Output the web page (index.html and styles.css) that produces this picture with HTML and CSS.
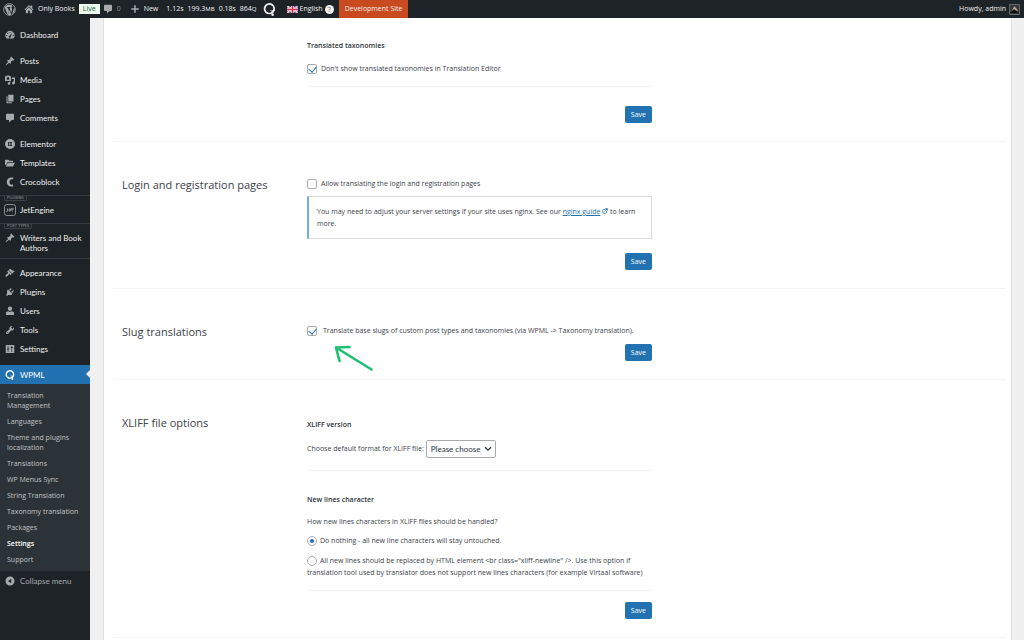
FILE: index.html
```html
<!DOCTYPE html>
<html lang="en">
<head>
<meta charset="utf-8">
<title>WPML Settings</title>
<link rel="stylesheet" href="styles.css">
</head>
<body>
<svg class="defs" aria-hidden="true">
  <symbol id="pin" viewBox="0 0 20 20"><path d="M10.440 3.020l1.820-1.820 6.360 6.350-1.830 1.820c-1.050-.68-2.480-.57-3.410.36l-.75.75c-.92.93-1.040 2.350-.35 3.410l-1.830 1.820-2.410-2.410-2.800 2.790c-.42.42-3.380 2.710-3.800 2.290s1.860-3.390 2.280-3.810l2.790-2.790L4.100 9.360l1.830-1.820c1.050.69 2.480.57 3.400-.36l.75-.75c.93-.92 1.050-2.350.36-3.410z"/></symbol>
  <symbol id="bubble" viewBox="0 0 20 20"><path d="M4 1.500h12c1 0 2 .9 2 2v8.500c0 1-1 2-2 2h-2.500l-5.500 5v-5H4c-1 0-2-1-2-2V3.500c0-1.100 1-2 2-2z"/></symbol>
  <symbol id="wpml" viewBox="0 0 20 20"><path d="M7.500 15.800A7.300 7.300 0 1 1 16.800 11" fill="none" stroke="currentColor" stroke-width="2.800"/><path d="M6.500 14.300c2.500 1.300 5.500 1 7.300-.8-1.600-.5-2.600-1.500-3-3 1.600 1.200 4.200 1.600 7.700-1.500-.2 3-1.200 5.300-3.300 6.800-2.700 1.800-6.500 2.200-9.700.5z"/><circle cx="14.800" cy="17.900" r="2"/></symbol>
</svg>

<header class="topbar">
  <a class="bar-logo" href="#" aria-label="About WordPress"><svg class="icon-lg" viewBox="0 0 24 24"><circle cx="12" cy="12" r="10.800" fill="none" stroke="currentColor" stroke-width="1.500"/><path d="M3.200 8.500 8.500 21.400 11 14.500 8.800 8.600H7.500V7.500h6v1.100h-1.600l3.200 9.600 1.500-4.800c.9-2.600-.9-3.500-.9-5 0-1.300 1-2.600 2.500-2.600A9.600 9.600 0 0 0 4 6.800zM12 13l-3 8.800c2 .6 4.300.5 6.300-.2zM20.500 7.500c.1 2.200-.6 3.800-1.300 5.800l-2.800 7.500A9.700 9.700 0 0 0 20.500 7.500z"/></svg></a>
  <a class="bar-item site" href="#"><svg class="icon" viewBox="0 0 20 20"><path d="m16.500 8.500 2.500 2.600-1.300 1.200L10 4.800l-7.700 7.500L1 11.100 10 2l3.300 3.300V3h3.200zM10 6.500l6.300 6.100V18.500h-4.500v-5H8.200v5H3.700v-5.900z"/></svg><span>Only Books</span></a>
  <span class="live">Live</span>
  <a class="bar-item notes" href="#"><svg class="icon" aria-hidden="true"><use href="#bubble"/></svg><span class="dim">0</span></a>
  <a class="bar-item new" href="#"><svg class="icon" viewBox="0 0 20 20"><path d="M8.500 2.500h3v6h6v3h-6v6h-3v-6h-6v-3h6z"/></svg><span>New</span></a>
  <a class="stats" href="#"><span>1.12s</span><span>199.3<small>MB</small></span><span>0.18s</span><span>864<small>Q</small></span></a>
  <a class="bar-wpml" href="#" aria-label="WPML"><svg class="icon-lg"><use href="#wpml"/></svg></a>
  <a class="lang" href="#"><svg class="flag" viewBox="0 0 22 14"><path fill="#46549b" d="M0 0h22v14H0z"/><path stroke="#fff" stroke-width="3" d="m0 0 22 14M22 0 0 14"/><path stroke="#d9536b" stroke-width="1.200" d="m0 0 22 14M22 0 0 14"/><path stroke="#fff" stroke-width="5" d="M11 0v14M0 7h22"/><path stroke="#d8304a" stroke-width="3" d="M11 0v14M0 7h22"/></svg><span>English</span><span class="help">?</span></a>
  <a class="dev" href="#">Development Site</a>
  <a class="account" href="#"><span>Howdy, admin</span><svg class="avatar" viewBox="0 0 11 11"><path fill="#34363a" stroke="#66696c" d="M.5.500h10v10H.5z"/><path fill="#b9ab98" d="m5.300 2.200 2.200 2.300L9 7 7 6.500 5 5.500 2.500 7.500 4 4.500z"/><path fill="#0c0d0e" d="m5 5.200 2.500 2L10 9H1z"/></svg></a>
</header>

<div class="shell">
  <nav class="menu" aria-label="Main menu">
    <ul class="group">
      <li><a href="#"><svg class="icon" viewBox="0 0 20 20"><path fill-rule="evenodd" d="M3.200 17A9 9 0 1 1 16.800 17zM10 3.500a1.200 1.200 0 1 0 0 2.400 1.200 1.200 0 0 0 0-2.400zM5.500 5.500a1.200 1.200 0 1 0 0 2.400 1.200 1.200 0 0 0 0-2.400zM3.700 10a1.200 1.200 0 1 0 0 2.400 1.200 1.200 0 0 0 0-2.400zm12.600 0a1.200 1.200 0 1 0 0 2.400 1.200 1.200 0 0 0 0-2.400zM14.500 6 9 11.500a2 2 0 1 0 2.500 2z"/></svg>Dashboard</a></li>
    </ul>
    <ul class="group">
      <li><a href="#"><svg class="icon"><use href="#pin"/></svg>Posts</a></li>
      <li><a href="#"><svg class="icon" viewBox="0 0 20 20"><path fill-rule="evenodd" d="M0 2.500h2.500l1-1.500h5l1 1.500H12V12H0zm6 1.900a2.800 2.800 0 1 0 0 5.600 2.800 2.800 0 0 0 0-5.600zM13.500 5H20v11a3 3 0 1 1-2.600-3V8h-3.900zM8 13.500h2.600V17a2.600 2.600 0 1 1-2.600-2.600z"/></svg>Media</a></li>
      <li><a href="#"><svg class="icon" viewBox="0 0 20 20"><path d="M6.500 1.500H17V15H6.500zM3 4.500h2v12h9V18.500H3z"/></svg>Pages</a></li>
      <li><a href="#"><svg class="icon"><use href="#bubble"/></svg>Comments</a></li>
    </ul>
    <ul class="group before-tag">
      <li><a href="#"><svg class="icon" viewBox="0 0 20 20"><path fill-rule="evenodd" d="M10 0a10 10 0 1 0 0 20 10 10 0 0 0 0-20zM6 6h1.800v8H6zm3 0h5v1.800H9zm0 3.100h5v1.800H9zm0 3.100h5V14H9z"/></svg>Elementor</a></li>
      <li><a href="#"><svg class="icon" viewBox="0 0 20 20"><path d="M0 3.500h6.500l2 2H16V8H5L2 14 0 13zm5.500 6H20L16 17H1.500z"/></svg>Templates</a></li>
      <li><a href="#"><svg class="icon" viewBox="0 0 20 20"><path d="M17 1.500C9-1 3.500 4 3.500 10S9 21 17 18.500l-1.500-3.300C11 16 9 13 9 10s2-6 6.500-5.200z"/></svg>Crocoblock</a></li>
    </ul>
    <ul class="group tagged">
      <li class="tag">PLUGINS</li>
      <li><a href="#"><svg class="icon-jet" viewBox="0 0 22 22"><rect x="1" y="1" width="20" height="20" rx="4" fill="none" stroke="currentColor" stroke-width="1.500"/><path d="M6.500 8v4.500c0 1.500-2 1.500-2.500.5M9 11h3.500c0-3.500-3.500-3-3.500 0 0 2.500 2 2.500 3.200 1.500M14.500 7v4.500c0 1.500.8 1.800 1.800 1.500M13.500 9h4.500" fill="none" stroke="currentColor" stroke-width="1.600"/></svg>JetEngine</a></li>
    </ul>
    <ul class="group tagged">
      <li class="tag">POST TYPES</li>
      <li><a href="#"><svg class="icon"><use href="#pin"/></svg>Writers and Book Authors</a></li>
    </ul>
    <ul class="group tagged core">
      <li><a href="#"><svg class="icon" viewBox="0 0 20 20"><path d="M14.480 11.060L7.410 3.990l1.500-1.500c.5-.56 2.300-.47 3.510.32 1.210.8 1.430 1.280 2.910 2.100 1.180.64 2.450 1.260 4.450.85zm-.71.71L6.700 4.700 4.930 6.470c-.39.39-.39 1.020 0 1.410l1.060 1.060c.39.39.39 1.030 0 1.420-.6.6-1.430 1.110-2.210 1.690-.35.26-.7.53-1.010.84C1.430 14.230.4 16.080 1.400 17.070c.99 1 2.840-.03 4.180-1.360.31-.31.58-.66.85-1.020.57-.78 1.080-1.610 1.690-2.210.39-.39 1.020-.39 1.410 0l1.060 1.060c.39.39 1.020.39 1.410 0z"/></svg>Appearance</a></li>
      <li><a href="#"><svg class="icon" viewBox="0 0 20 20"><path d="M13.110 4.360L9.870 7.600 8 5.730l3.240-3.240c.35-.34 1.050-.2 1.560.32.52.51.66 1.210.31 1.550zm-8 1.770l.91-1.120 9.010 9.010-1.190.84c-.71.71-2.630 1.160-3.820 1.160H6.140L4.900 17.260c-.59.59-1.540.59-2.120 0-.59-.58-.59-1.530 0-2.120l1.240-1.240v-3.880c0-1.130.4-3.190 1.090-3.890zm7.260 3.970l3.240-3.240c.34-.35 1.040-.21 1.550.31.52.51.66 1.210.31 1.550l-3.240 3.250z"/></svg>Plugins</a></li>
      <li><a href="#"><svg class="icon" viewBox="0 0 20 20"><circle cx="10" cy="5.500" r="4.300"/><path d="M2 18v-4c0-2.500 2.500-3.500 5-3.700l3 1.700 3-1.700c2.500.2 5 1.200 5 3.700v4z"/></svg>Users</a></li>
      <li><a href="#"><svg class="icon" viewBox="0 0 20 20"><path fill-rule="evenodd" d="M16.680 9.770c-1.340 1.340-3.300 1.670-4.950.99l-5.410 6.520c-.99.99-2.590.99-3.580 0s-.99-2.590 0-3.570l6.520-5.420c-.68-1.650-.35-3.610.99-4.950 1.280-1.280 3.120-1.620 4.720-1.060l-2.890 2.890 2.820 2.820 2.860-2.870c.53 1.580.18 3.390-1.080 4.650zM3.810 16.210c.4.39 1.040.39 1.430 0 .4-.4.4-1.040 0-1.430-.39-.4-1.030-.4-1.430 0-.39.39-.39 1.030 0 1.430z"/></svg>Tools</a></li>
      <li><a href="#"><svg class="icon" viewBox="0 0 20 20"><path fill-rule="evenodd" d="M1.500 2h17v16h-17zM5.500 4v5H4v2h1.500v5h1.300v-5h1.500V9H6.800V4zM13 4v2h-1.500v2H13v8h1.300V8h1.500V6h-1.500V4z"/></svg>Settings</a></li>
    </ul>
    <ul class="group">
      <li class="current"><a href="#"><svg class="icon"><use href="#wpml"/></svg>WPML</a></li>
    </ul>
    <ul class="submenu">
      <li><a href="#">Translation Management</a></li>
      <li><a href="#">Languages</a></li>
      <li><a href="#">Theme and plugins localization</a></li>
      <li><a href="#">Translations</a></li>
      <li><a href="#">WP Menus Sync</a></li>
      <li><a href="#">String Translation</a></li>
      <li><a href="#">Taxonomy translation</a></li>
      <li><a href="#">Packages</a></li>
      <li><a class="active" href="#">Settings</a></li>
      <li><a href="#">Support</a></li>
    </ul>
    <button class="collapse" type="button"><svg class="icon" viewBox="0 0 20 20"><path fill-rule="evenodd" d="M10 1a9 9 0 1 0 0 18 9 9 0 0 0 0-18zm2.500 4.500v9L6 10z"/></svg>Collapse menu</button>
  </nav>

  <main class="content">
    <div class="panel">
      <section class="section taxonomies">
        <div class="fields">
          <h3>Translated taxonomies</h3>
          <label class="choice"><input type="checkbox" checked><span>Don't show translated taxonomies in Translation Editor</span></label>
          <hr>
          <button class="save" type="button">Save</button>
        </div>
      </section>

      <section class="section login">
        <h2>Login and registration pages</h2>
        <div class="fields">
          <label class="choice"><input type="checkbox"><span>Allow translating the login and registration pages</span></label>
          <p class="notice">You may need to adjust your server settings if your site uses nginx. See our <a href="#">nginx guide</a> <svg class="ext" viewBox="0 0 12 12"><path d="M7 3H3.500Q1.500 3 1.500 5v3.500q0 2 2 2H7q2 0 2-2V6M5 7l5.500-5.500M6.500 1.200h4.300v4.300" fill="none" stroke="currentColor" stroke-width="1.600"/></svg> to learn more.</p>
          <button class="save" type="button">Save</button>
        </div>
      </section>

      <section class="section slugs">
        <h2>Slug translations</h2>
        <div class="fields">
          <label class="choice wide"><input type="checkbox" checked><span>Translate base slugs of custom post types and taxonomies (via WPML -&gt; Taxonomy translation).</span></label>
          <button class="save" type="button">Save</button>
          <svg class="arrow" viewBox="0 0 40 27" aria-hidden="true"><path d="M37.500 24.500 2 2.500M15.500 2 2 2.500 5.500 16" fill="none" stroke="#1dbf73" stroke-width="2.600" stroke-linecap="round" stroke-linejoin="round"/></svg>
        </div>
      </section>

      <section class="section xliff">
        <h2>XLIFF file options</h2>
        <div class="fields">
          <h3>XLIFF version</h3>
          <div class="format">
            <label for="format">Choose default format for XLIFF file:</label>
            <span class="select"><select id="format"><option>Please choose</option></select><svg class="chevron" viewBox="0 0 8 6"><path d="m1 1.200 3 3 3-3" fill="none" stroke="currentColor" stroke-width="1.300"/></svg></span>
          </div>
          <hr>
          <h3 class="lines-title">New lines character</h3>
          <p class="question">How new lines characters in XLIFF files should be handled?</p>
          <label class="option"><input type="radio" name="newline" checked>Do nothing - all new line characters will stay untouched.</label>
          <label class="option"><input type="radio" name="newline">All new lines should be replaced by HTML element &lt;br class="xliff-newline" /&gt;. Use this option if translation tool used by translator does not support new lines characters (for example Virtaal software)</label>
          <hr class="last">
          <button class="save" type="button">Save</button>
        </div>
      </section>
    </div>
  </main>
</div>
</body>
</html>
```
FILE: styles.css
```css
* { box-sizing: border-box; }

body {
  margin: 0;
  min-height: 100vh;
  display: flex;
  flex-direction: column;
  background: #f0f0f1;
  color: #3c434a;
  font: 7px/12px "Open Sans", "Noto Sans", sans-serif;
}

a { color: inherit; text-decoration: none; }
ul { list-style: none; margin: 0; padding: 0; }
h2, h3, p { margin: 0; }
button, select, input { font: inherit; margin: 0; }
svg { fill: currentColor; flex: none; }

.defs { position: absolute; width: 0; height: 0; }
.icon { width: 10px; height: 10px; }
.icon-lg { width: 13px; height: 13px; display: block; }

/* Top bar */
.topbar {
  height: 18px;
  display: flex;
  align-items: center;
  background: #1d2327;
  color: #f0f0f1;
  white-space: nowrap;
}
.topbar svg { color: #a7aaad; }
.bar-logo { margin-left: 3px; }
.bar-item { display: flex; align-items: center; }
.site { margin-left: 8px; gap: 4px; }
.live {
  margin-left: 4px;
  padding: 0 4px;
  line-height: 10px;
  background: #edfaef;
  color: #14622f;
}
.notes { margin-left: 3px; gap: 4px; }
.dim { color: #8c9196; }
.new { margin-left: 9px; gap: 4px; }
.stats { margin-left: 8px; display: flex; gap: 4px; }
.stats small { font-size: 6px; }
.bar-wpml { margin-left: 6px; }
.topbar .bar-wpml svg { color: #f0f0f1; }
.lang { margin-left: 11px; display: flex; align-items: center; gap: 2px; }
.flag { width: 11px; height: 7px; }
.help {
  width: 9px;
  height: 9px;
  border-radius: 50%;
  background: #f0f0f1;
  color: #50575e;
  line-height: 9px;
  text-align: center;
}
.dev {
  margin-left: 5px;
  padding: 0 6px;
  line-height: 18px;
  background: #ca4a1f;
}
.account { margin-left: auto; padding-right: 4px; display: flex; align-items: center; gap: 3px; }
.avatar { width: 11px; height: 11px; }

.shell { flex: 1; display: flex; }

/* Side menu */
.menu {
  flex: none;
  width: 90px;
  padding-top: 7px;
  background: #1d2327;
  color: #f0f0f1;
  line-height: 10px;
}
.group { margin-bottom: 7px; }
.before-tag { margin-bottom: 4px; }
.group a, .collapse {
  display: flex;
  gap: 5px;
  padding: 5px 5px 4px;
  font: 8px/10px Lato, "Open Sans", sans-serif;
}
.group .icon, .collapse .icon { color: #a7aaad; }
.icon-jet { width: 12px; height: 12px; margin: -1px; color: #a7aaad; }
.tagged {
  position: relative;
  margin: 4px 0 0;
  padding-top: 4px;
  border-top: 1px solid #343a40;
}
.tagged.core { margin: 1px 0 7px; }
.tag {
  position: absolute;
  top: 0;
  left: 4px;
  padding: 0 2px;
  border: 1px solid #3c434a;
  border-top: 0;
  border-radius: 0 0 2px 2px;
  color: #a7aaad;
  font-size: 4px;
  line-height: 4px;
}
.current { position: relative; background: #2271b1; color: #fff; }
.group .current .icon { color: #fff; }
.current::after {
  content: "";
  position: absolute;
  right: 0;
  top: 5px;
  border: 4px solid transparent;
  border-right-color: #f0f0f1;
  border-left: 0;
}
.submenu { margin-top: -7px; padding: 4px 0 3px; background: #2c3338; color: #c0c3c6; }
.submenu a { display: block; padding: 3px 8px 3px 7px; }
.submenu .active { color: #fff; font-weight: 600; }
.collapse { width: 100%; border: 0; background: none; color: #a7aaad; }

/* Settings panel */
.content { flex: 1; display: flex; padding: 0 12px 0 13px; }
.panel {
  flex: 1;
  padding: 0 5px 0 9px;
  background: #fff;
  border: solid #e0e1e3;
  border-width: 0 1px;
}
.section {
  display: grid;
  grid-template-columns: 185px minmax(0, 345px);
  padding: 36px 9px 18px;
  border-bottom: 1px solid #f5f5f6;
}
.section h2 { font-size: 11px; line-height: 14px; font-weight: 400; }
.fields { grid-column: 2; position: relative; display: flex; flex-direction: column; }
.fields h3 { font-size: 7px; line-height: 12px; font-weight: 600; color: #2c3338; }
hr { width: 100%; margin: 0; border: 0; border-top: 1px solid #f3f3f4; }

.taxonomies { padding-top: 22px; }
.taxonomies .choice { margin-top: 11px; }
.taxonomies hr { margin: 11px 0 19px; }

.choice { display: flex; align-items: center; gap: 4px; }
.choice.wide { gap: 6px; }

input {
  appearance: none;
  flex: none;
  width: 10px;
  height: 10px;
  border: 1px solid #a7aaad;
  border-radius: 2px;
  background: #fff;
  display: inline-grid;
  place-items: center;
}
input[type="radio"] { border-radius: 50%; }
input[type="checkbox"]:checked::before {
  content: "";
  width: 6px;
  height: 4px;
  margin-bottom: 2px;
  border: solid #2271b1;
  border-width: 0 0 1px 1px;
  transform: rotate(-50deg);
}
input[type="radio"]:checked::before {
  content: "";
  width: 4px;
  height: 4px;
  border-radius: 50%;
  background: #2271b1;
}

.save {
  align-self: flex-end;
  padding: 0 6px;
  border: 0;
  border-radius: 2px;
  background: #2271b1;
  color: #fff;
  line-height: 17px;
}

.notice {
  margin: 6px 0 14px;
  padding: 9px 12px 8px 8px;
  border: 1px solid #dcdcde;
  border-left: 2px solid #72aee6;
}
.notice a { color: #2271b1; text-decoration: underline; }
.ext { width: 6px; height: 6px; color: #2271b1; }

.slugs .save { margin-top: 7px; }
.arrow { position: absolute; top: 20px; left: 27px; width: 40px; height: 27px; }

.format { margin-top: 9px; display: flex; align-items: center; gap: 2px; }
.select { position: relative; color: #2c3338; }
.select select {
  display: block;
  height: 18px;
  padding: 0 14px 0 4px;
  appearance: none;
  border: 1px solid #a7aaad;
  border-radius: 2px;
  background: #fff;
  color: inherit;
  font: 8px/16px Lato, "Open Sans", sans-serif;
}
.chevron { position: absolute; right: 4px; top: 6px; width: 8px; height: 6px; pointer-events: none; }
.xliff h3 { margin-top: 3px; }
.xliff hr { margin-top: 12px; }
.xliff .lines-title { margin-top: 23px; }
.question { margin: 10px 0 7px; }
.option { margin-bottom: 8px; }
.option input { margin-right: 3px; vertical-align: middle; }
.xliff .last { margin: 3px 0 11px; }
```
